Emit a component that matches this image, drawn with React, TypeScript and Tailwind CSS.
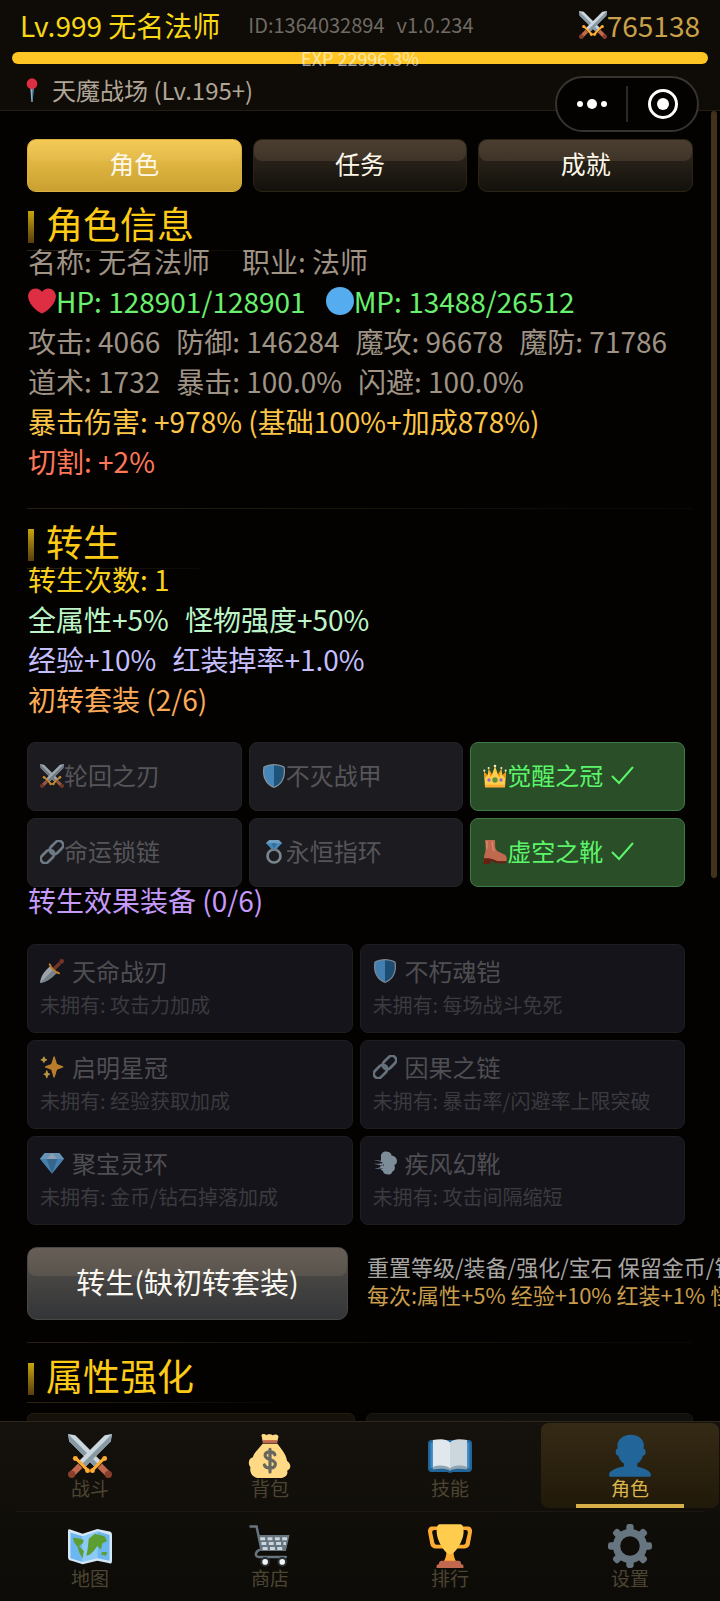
import { useState } from 'react';
import type { ReactNode } from 'react';
import clsx from 'clsx';

type IconName =
  | 'swords' | 'shield' | 'crown' | 'link' | 'ring' | 'boot' | 'dagger' | 'sparkles' | 'gem' | 'dash'
  | 'pin' | 'heart' | 'circle' | 'bag' | 'book' | 'person' | 'map' | 'cart' | 'trophy' | 'gear';

const sword = (
  <>
    <path d="M0 0l6 1 21 21-5 5L1 6z" fill="#CCD6DD" />
    <path d="M0 0l24.500 24.500L22 27 1 6z" fill="#8899A6" />
    <path d="M20 29.500l9.500-9.500" stroke="#FFAC33" strokeWidth="2.500" strokeLinecap="round" />
    <circle cx="20" cy="30" r="2" fill="#FFAC33" />
    <circle cx="30" cy="20" r="2" fill="#FFAC33" />
    <path d="M26 26l6 6" stroke="#C1694F" strokeWidth="5" />
    <circle cx="33" cy="33" r="3" fill="#8A3F2C" />
  </>
);

const icons: Record<IconName, ReactNode> = {
  swords: (
    <>
      <g>{sword}</g>
      <g transform="matrix(-1 0 0 1 36 0)">{sword}</g>
    </>
  ),
  shield: (
    <>
      <path d="M18 0C13 0 7 1.500 2 4c-1 8-.8 14 2.500 20.500C7.500 30.500 12 34 18 36c6-2 10.500-5.500 13.500-11.500C34.800 18 35 12 34 4c-5-2.500-11-4-16-4z" fill="#A9BCC9" />
      <path d="M18 1.800C13.500 1.800 8 3 3.700 5.200c-.8 7-.5 12.500 2.400 18.500C8.800 29 12.500 32 18 34z" fill="#55ACEE" />
      <path d="M18 1.800c4.500 0 10 1.200 14.300 3.400.8 7 .5 12.500-2.400 18.500C27.200 29 23.500 32 18 34z" fill="#226699" />
    </>
  ),
  crown: (
    <>
      <path d="M3 35L1.500 12 7 17 8.500 7l5 9L18 3l4.500 13 5-9L29 17l5.500-5L33 35z" fill="#FFCC4D" />
      <path d="M8.500 7l5 9L11 20zM27.500 7l-5 9 2.500 4zM1.500 12L7 17l-4 4zM34.500 12L29 17l4 4z" fill="#F4900C" />
      <path d="M3 31h30v4H3z" fill="#FFAC33" />
      <circle cx="18" cy="3" r="2" fill="#FFE8B6" />
      <circle cx="8.500" cy="6" r="1.600" fill="#FFE8B6" />
      <circle cx="27.500" cy="6" r="1.600" fill="#FFE8B6" />
      <circle cx="2" cy="10" r="1.600" fill="#FFE8B6" />
      <circle cx="34" cy="10" r="1.600" fill="#FFE8B6" />
      <circle cx="18" cy="24" r="4" fill="#5C913B" />
      <circle cx="9" cy="24" r="2.500" fill="#9266CC" />
      <circle cx="27" cy="24" r="2.500" fill="#9266CC" />
    </>
  ),
  link: (
    <g fill="none" stroke="#8899A6" strokeWidth="4" transform="rotate(-45 18 18)">
      <rect x="-3" y="11.500" width="23" height="13" rx="6.500" />
      <rect x="16" y="11.500" width="23" height="13" rx="6.500" />
    </g>
  ),
  ring: (
    <>
      <circle cx="18" cy="24" r="9.700" fill="none" stroke="#99AAB5" strokeWidth="4" />
      <path d="M14 12h8l3 4H11z" fill="#8899A6" />
      <path d="M11 0h14l5 5-8 8h-8L6 5z" fill="#55ACEE" />
      <path d="M6 5h24l-5-5H11z" fill="#8CCAF7" />
      <path d="M14 5h8l-4 8z" fill="#3B88C3" />
    </>
  ),
  boot: (
    <>
      <path d="M3 0h15c.5 7-.5 12 2 15 3 4 12 5 14.500 9 1.500 3 1.500 5 .5 8H22l-9-4-4 3H1l1-8c3-7 2-15 1-23z" fill="#C1694F" />
      <path d="M1 27c5 1 8-1 12 2l9 3h13v3H20l-8-4-2 5H1z" fill="#662113" />
      <path d="M6 2v11M14 2c0 8 0 12 3 15" stroke="#DA8B72" strokeWidth="2" fill="none" />
    </>
  ),
  dagger: (
    <>
      <path d="M0 36c1-9 5-16 15-25l10 10C16 30 9 35 0 36z" fill="#D5DFE6" />
      <path d="M0 36L20 16l5 5C16 30 9 35 0 36z" fill="#9FB0BC" />
      <path d="M21 15l9-9" stroke="#A0412D" strokeWidth="5" />
      <circle cx="32.500" cy="3.500" r="3.500" fill="#A0412D" />
      <path d="M14.500 8c2 5 8 12 14 13.500" stroke="#FFAC33" strokeWidth="3" fill="none" strokeLinecap="round" />
    </>
  ),
  sparkles: (
    <>
      <path d="M34.347 16.893l-8.899-3.294-3.323-10.891c-.128-.42-.517-.708-.956-.708-.439 0-.828.288-.956.708l-3.322 10.891-8.9 3.294c-.393.146-.653.519-.653.938 0 .418.26.793.653.938l8.895 3.293 3.324 11.223c.126.424.516.715.959.715.442 0 .833-.291.959-.716l3.324-11.223 8.896-3.293c.391-.144.652-.518.652-.937 0-.418-.261-.792-.653-.938z" fill="#FFAC33" />
      <path d="M14.347 27.894l-2.314-.856-.9-3.3c-.118-.436-.513-.738-.964-.738-.451 0-.846.302-.965.737l-.9 3.3-2.313.856c-.393.146-.653.52-.653.938 0 .418.26.793.653.938l2.301.853.907 3.622c.112.444.511.756.97.756.459 0 .858-.312.97-.757l.907-3.622 2.301-.853c.393-.144.653-.519.653-.937 0-.418-.26-.793-.653-.937zM10.009 6.231l-2.364-.875-.876-2.365c-.145-.393-.519-.653-.938-.653-.418 0-.792.26-.938.653l-.875 2.365-2.365.875c-.393.146-.653.52-.653.938 0 .418.26.793.653.938l2.365.875.875 2.365c.146.393.52.653.938.653.418 0 .792-.26.938-.653l.875-2.365 2.365-.875c.393-.146.653-.52.653-.938 0-.418-.26-.792-.653-.938z" fill="#FFCC4D" />
    </>
  ),
  gem: (
    <>
      <path d="M7 3h22l7 9-18 22L0 12z" fill="#5DADEC" />
      <path d="M7 3h22l7 9H0z" fill="#8CCAF7" />
      <path d="M10 12l8-9 8 9z" fill="#BDDDF4" />
      <path d="M10 12h16l-8 22z" fill="#4289C1" />
    </>
  ),
  dash: (
    <>
      <path d="M12 9c-1-6 5-9 9-8 4 0 7 3 7 6 5 0 8 4 8 8s-2 5-4 6c2 5 0 9-3 10-1 4-5 5-8 4-4 0-6-3-6-5-3-1-5-4-4-7-1-3-1-6 1-8z" fill="#AABFCF" />
      <path d="M0 15l14 3M2 21h14M4 28l11-3" stroke="#17161a" strokeWidth="2" />
      <path d="M0 13l15 2v2zM1 19h14v3zM2 27l14-4v3z" fill="#AABFCF" />
    </>
  ),
  pin: (
    <>
      <path d="M15.500 14h5L19 36h-2z" fill="#8CB4CC" />
      <path d="M18 14h2.500L19 36h-1z" fill="#4D86A5" />
      <circle cx="18" cy="8.500" r="8" fill="#DD2E44" />
    </>
  ),
  heart: (
    <path d="M35.885 11.833c0-5.450-4.418-9.868-9.867-9.868-3.308 0-6.227 1.633-8.018 4.129-1.791-2.496-4.710-4.129-8.017-4.129-5.450 0-9.868 4.417-9.868 9.868 0 .772.098 1.520.266 2.241C1.751 22.587 11.216 31.568 18 34.034c6.783-2.466 16.249-11.447 17.617-19.959.170-.721.268-1.469.268-2.242z" fill="#DD2E44" />
  ),
  circle: <circle cx="18" cy="18" r="18" fill="#55ACEE" />,
  bag: (
    <>
      <path d="M12 8c-3 4-7 7-8 11-4 1-4 6-2 8-1 5 2 9 7 9h17c5 0 7-3 6-6 4-2 3-6 0-8-1-6-5-10-8-14z" fill="#FFD983" />
      <path d="M11 1c1-2 3-1 4 0 1-1 4-1 5 0 2-1 4-1 5 1l-1 4H12z" fill="#FFD983" />
      <path d="M12 5h12v2.500H12z" fill="#C1694F" />
      <path d="M22 17c-1-3.300-8-3.300-8 .5s8.400 2.800 8.400 7-8 4.500-9 .8M18 12.500v18.500" fill="none" stroke="#66675f" strokeWidth="2.600" strokeLinecap="round" />
    </>
  ),
  book: (
    <>
      <path d="M0 8c0-2 1-3 3-3h30c2 0 3 1 3 3v20c0 2-1 3-3 3H20c-1 1-3 1-4 0H3c-2 0-3-1-3-3z" fill="#226699" />
      <path d="M2 7h32v21H2z" fill="#3B88C3" />
      <path d="M4 5c5-1 11-1.500 14 2v22c-4-2-9-2-14-1z" fill="#E1E8ED" />
      <path d="M32 5c-5-1-11-1.500-14 2v22c4-2 9-2 14-1z" fill="#CCD6DD" />
      <path d="M4 27c5-2 11-1.500 14 1 3-2.500 9-3 14-1v2c-5-1-11-1-14 1-3-2-9-2-14-1z" fill="#8FA4B0" />
    </>
  ),
  person: (
    <path d="M24 26.799v-2.566c2-1.348 4.080-3.779 4.703-6.896.186.103.206.170.413.170.991 0 1.709-1.287 1.709-2.873 0-1.562-.823-2.827-1.794-2.865.187-.674.293-1.577.293-2.735C29.324 5.168 26 .527 18.541.527c-6.629 0-10.777 4.641-10.777 8.507 0 1.123.069 2.043.188 2.755-.911.137-1.629 1.352-1.629 2.845 0 1.587.804 2.873 1.796 2.873.206 0 .025-.067.209-.170C8.952 20.453 11 22.885 13 24.232v2.414c-5 .645-12 3.437-12 6.230v1.061C1 35 2.076 35 3.137 35h29.725C33.924 35 35 35 35 33.938v-1.061c0-2.615-6-5.225-11-6.078z" fill="#226699" />
  ),
  map: (
    <>
      <path d="M0 6c0-2 1-2 3-1l9 3 12-4 9 2c2 0 3 1 3 3v21c0 2-1 3-3 2l-9-2-12 3-9-3c-2 0-3-1-3-3z" fill="#D5E6F5" />
      <path d="M2 7l10 3v21L2 28z" fill="#6DB7F0" />
      <path d="M12 10l12-4v22l-12 3z" fill="#8CCAF7" />
      <path d="M24 6l10 3v21l-10-2z" fill="#6DB7F0" />
      <path d="M4 11l6 1 3 1-1 3-3 2 4 4-1 6-3-5-1-4-3-4zM17 12l5-4 8 2 2 4-4 2-1 5-3-3-3 4-3 3-3 1 1-5zM28 23l4 0-1 3-4-1z" fill="#5C9E31" />
    </>
  ),
  cart: (
    <>
      <path d="M2 2h5l4 19M31 27H9c-4 0-3-5 1-6" fill="none" stroke="#66757F" strokeWidth="2" strokeLinecap="round" />
      <path d="M8 9h26l-3 13H11z" fill="#66757F" />
      <path d="M10 12h22M11 16h20M12 20h18" stroke="#CCD6DD" strokeWidth="2.500" strokeDasharray="4 2" />
      <circle cx="14" cy="31" r="4" fill="#292F33" />
      <circle cx="28" cy="31" r="4" fill="#292F33" />
      <circle cx="14" cy="31" r="2.300" fill="#F1F3F4" />
      <circle cx="28" cy="31" r="2.300" fill="#F1F3F4" />
    </>
  ),
  trophy: (
    <>
      <path d="M5.123 5h6C12.227 5 13 4.896 13 6V4c0-1.104-.773-2-1.877-2h-8c-2 0-3.583 2.125-3 5 0 0 1.791 9.375 1.917 9.958C2.373 18.500 4.164 20 6.081 20h6.958c1.105 0-.039-1.896-.039-3v-2c0 1.104-.773 2-1.877 2h-4c-1.104 0-1.833-1.042-2-2S3.539 7.667 3.539 7.667C3.206 5.750 4.018 5 5.123 5zm25.812 0h-6C23.831 5 22 4.896 22 6V4c0-1.104 1.831-2 2.935-2h8c2 0 3.584 2.125 3 5 0 0-1.633 9.419-1.771 10-.354 1.500-2.042 3-4 3h-7.146C21.914 20 22 18.104 22 17v-2c0 1.104 1.831 2 2.935 2h4c1.104 0 1.834-1.042 2-2s1.584-7.333 1.584-7.333C32.851 5.750 32.040 5 30.935 5zM20.832 22c0-6.958-2.709 0-2.709 0s-3-6.958-3 0-3.291 10-3.291 10h12.292c-.001 0-3.292-3.042-3.292-10z" fill="#FFAC33" />
      <path d="M29.123 6.577c0 6.775-6.770 18.192-11 18.192-4.231 0-11-11.417-11-18.192 0-5.195 1-6.319 3-6.319 1.374 0 6.025-.027 8-.027l7-.001c2.917-.001 4 .684 4 6.347z" fill="#FFCC4D" />
      <path d="M27 33H9v-1c0-1.104 1.164-2 2.206-2h13.917C26.165 30 27 30.896 27 32zM29 36H7v-1.625C7 33.615 7.738 33 8.498 33h19.250c.759 0 1.252.615 1.252 1.375z" fill="#C1694F" />
    </>
  ),
  gear: (
    <g fill="#66757F">
      <circle cx="18" cy="18" r="11" fill="none" stroke="#66757F" strokeWidth="6" />
      {[0, 45, 90, 135, 180, 225, 270, 315].map((deg) => (
        <rect key={deg} x="15" y="0" width="6" height="8" rx="2" transform={`rotate(${deg} 18 18)`} />
      ))}
    </g>
  ),
};

function Icon({ name, className }: { name: IconName; className?: string }) {
  return (
    <svg viewBox="0 0 36 36" aria-hidden="true" className={clsx('shrink-0', className)}>
      {icons[name]}
    </svg>
  );
}

function SectionTitle({ children }: { children: ReactNode }) {
  return (
    <h2 className="relative flex h-9 w-fit items-center pb-1 pl-px text-[37px] leading-8 text-[#fdcb16]">
      <span className="mt-2 mr-3 h-8 w-1.5 bg-linear-to-b from-[#c9a50c] to-[#583f0d]" />
      {children}
      <span className="absolute top-[43px] left-0 -right-20 h-px bg-linear-to-r from-[#2e240e] to-[#0a0805]" />
    </h2>
  );
}

function Divider() {
  return <hr className="mb-4 h-px border-0 bg-linear-to-r from-[#28200f] to-[#090805]" />;
}

function StatLine({ items, className }: { items: string[]; className?: string }) {
  return (
    <p className={clsx('flex gap-4', className)}>
      {items.map((item) => (
        <span key={item}>{item}</span>
      ))}
    </p>
  );
}

const tabs = ['角色', '任务', '成就'];

const setItems: { icon: IconName; name: string; owned?: boolean }[] = [
  { icon: 'swords', name: '轮回之刃' },
  { icon: 'shield', name: '不灭战甲' },
  { icon: 'crown', name: '觉醒之冠', owned: true },
  { icon: 'link', name: '命运锁链' },
  { icon: 'ring', name: '永恒指环' },
  { icon: 'boot', name: '虚空之靴', owned: true },
];

const effectItems: { icon: IconName; name: string; effect: string }[] = [
  { icon: 'dagger', name: '天命战刃', effect: '攻击力加成' },
  { icon: 'shield', name: '不朽魂铠', effect: '每场战斗免死' },
  { icon: 'sparkles', name: '启明星冠', effect: '经验获取加成' },
  { icon: 'link', name: '因果之链', effect: '暴击率/闪避率上限突破' },
  { icon: 'gem', name: '聚宝灵环', effect: '金币/钻石掉落加成' },
  { icon: 'dash', name: '疾风幻靴', effect: '攻击间隔缩短' },
];

const navRows: { icon: IconName; label: string }[][] = [
  [
    { icon: 'swords', label: '战斗' },
    { icon: 'bag', label: '背包' },
    { icon: 'book', label: '技能' },
    { icon: 'person', label: '角色' },
  ],
  [
    { icon: 'map', label: '地图' },
    { icon: 'cart', label: '商店' },
    { icon: 'trophy', label: '排行' },
    { icon: 'gear', label: '设置' },
  ],
];

export default function App() {
  const [tab, setTab] = useState('角色');
  const [page, setPage] = useState('角色');

  return (
    <div className="relative flex h-screen flex-col overflow-hidden bg-[#030201] font-['Noto_Sans_CJK_SC',sans-serif]">
      <header className="shrink-0 border-b border-[#251d10] bg-[#0f0b07] px-3">
        <div className="flex h-[52px] items-center px-2 pb-0.5 whitespace-nowrap">
          <span className="text-[28px] text-[#f8d714]">Lv.999 无名法师</span>
          <span className="ml-7 text-xl text-[#6e6a64]">ID:1364032894</span>
          <span className="ml-3 text-xl text-[#6e6a64]">v1.0.234</span>
          <span className="ml-auto flex items-center text-[28px] text-[#c9a14a]">
            <Icon name="swords" className="size-7" />
            765138
          </span>
        </div>
        <div className="flex h-3 items-center justify-center rounded-full bg-[#ffc524] text-lg leading-3 text-white/60">
          EXP 22996.3%
        </div>
        <div className="flex h-[46px] items-center gap-2 pt-1.5 pl-2 text-2xl text-[#b0a597]">
          <Icon name="pin" className="size-6" />
          天魔战场 (Lv.195+)
        </div>
      </header>

      {/* host app capsule */}
      <div className="absolute top-[76px] right-[21px] flex h-14 w-36 items-center rounded-full border-2 border-[#37332f] bg-[#030201]">
        <button type="button" aria-label="更多" className="flex flex-1 items-center justify-center gap-1">
          <span className="size-1.5 rounded-full bg-white" />
          <span className="size-2.5 rounded-full bg-white" />
          <span className="size-1.5 rounded-full bg-white" />
        </button>
        <span className="h-9 w-0.5 bg-[#2c2a28]" />
        <button type="button" aria-label="关闭" className="flex flex-1 items-center justify-center">
          <span className="flex size-[30px] items-center justify-center rounded-full border-3 border-white">
            <span className="size-3 rounded-full bg-white" />
          </span>
        </button>
      </div>

      <div className="relative min-h-0 flex-1">
        <main className="h-full overflow-hidden px-[27px] pt-7">
          <div className="flex gap-[11px]">
            {tabs.map((name) => (
              <button
                key={name}
                type="button"
                onClick={() => setTab(name)}
                className={clsx(
                  'relative h-[53px] flex-1 rounded-[9px] border pb-1 text-[25px] leading-none text-[#fdf8ea] before:absolute before:inset-x-0 before:top-0 before:h-[21px] before:rounded-lg',
                  tab === name
                    ? 'border-[#d9b03c] bg-linear-to-b from-[#f3c64c] to-[#c9a031] before:bg-white/5'
                    : 'border-[#2c2515] bg-linear-to-b from-[#352c22] to-[#13110b] before:bg-[#f0c8a0]/12',
                )}
              >
                <span className="relative">{name}</span>
              </button>
            ))}
          </div>

          <section className="mt-[15px]">
            <SectionTitle>角色信息</SectionTitle>
            <div className="relative -mt-0.5 pl-px text-[28px] leading-10 whitespace-nowrap text-[#9f9385]">
              <p className="flex gap-8">
                <span>名称: 无名法师</span>
                <span>职业: 法师</span>
              </p>
              <p className="flex items-center text-[#69f06e]">
                <Icon name="heart" className="size-7" />
                <span className="mr-5">HP: 128901/128901</span>
                <Icon name="circle" className="size-7" />
                <span>MP: 13488/26512</span>
              </p>
              <StatLine items={['攻击: 4066', '防御: 146284', '魔攻: 96678', '魔防: 71786']} />
              <StatLine items={['道术: 1732', '暴击: 100.0%', '闪避: 100.0%']} />
              <p className="text-[#fcc547]">暴击伤害: +978% (基础100%+加成878%)</p>
              <p className="text-[#ff7759]">切割: +2%</p>
            </div>
          </section>

          <section className="mt-[27px]">
            <Divider />
            <SectionTitle>转生</SectionTitle>
            <div className="relative -mt-0.5 pl-px text-[28px] leading-10 whitespace-nowrap">
              <p className="text-[#fbd21b]">转生次数: 1</p>
              <StatLine className="text-[#bdf5c8]" items={['全属性+5%', '怪物强度+50%']} />
              <StatLine className="text-[#c4bffc]" items={['经验+10%', '红装掉率+1.0%']} />
              <p className="text-[#fbab58]">初转套装 (2/6)</p>
            </div>

            <ul className="mt-[23px] mr-2 grid grid-cols-3 gap-[7px]">
              {setItems.map((item) => (
                <li
                  key={item.name}
                  className={clsx(
                    'flex h-[69px] items-center rounded-lg border px-3 pb-1 text-2xl',
                    item.owned ? 'border-[#3f7a45] bg-[#294e28] text-[#5cf56a]' : 'border-[#232327] bg-[#1c1b20] text-[#56555a]',
                  )}
                >
                  <Icon name={item.icon} className={clsx('mt-0.5 size-6', !item.owned && 'opacity-75')} />
                  {item.name}
                  {item.owned && (
                    <svg viewBox="0 0 24 24" className="ml-2 size-6" fill="none" stroke="currentColor" strokeWidth="2" aria-label="已拥有">
                      <path d="M1 13l7 7L22 4" />
                    </svg>
                  )}
                </li>
              ))}
            </ul>

            <p className="-mt-0.5 pl-px text-[28px] leading-[30px] text-[#c59afb]">转生效果装备 (0/6)</p>

            <ul className="mt-[29px] mr-2 grid grid-cols-2 gap-[7px]">
              {effectItems.map((item) => (
                <li key={item.name} className="h-[89px] rounded-lg border border-[#1e1d22] bg-[#15141a] px-3 pt-2.5">
                  <div className="flex items-center gap-2 text-2xl leading-8 text-[#4f4e53]">
                    <Icon name={item.icon} className="size-6 opacity-70" />
                    {item.name}
                  </div>
                  <p className="text-xl leading-9 whitespace-nowrap text-[#3b3a3f]">未拥有: {item.effect}</p>
                </li>
              ))}
            </ul>

            <div className="mt-[22px] flex items-center gap-[19px]">
              <button
                type="button"
                className="relative h-[73px] w-[321px] shrink-0 rounded-[10px] border border-[#4a4844] bg-linear-to-b from-[#56514c] to-[#333537] pb-1 text-[29px] leading-none text-[#fbf8f2] before:absolute before:inset-x-0 before:top-0 before:h-7 before:rounded-lg before:bg-[#ffdcb4]/10"
              >
                <span className="relative">转生(缺初转套装)</span>
              </button>
              <div className="pb-2 text-[22px] leading-7 whitespace-nowrap text-[#a8a6a3]">
                <p>重置等级/装备/强化/宝石 保留金币/钻石</p>
                <p className="text-[#c99d4b]">每次:属性+5% 经验+10% 红装+1% 怪物+50%</p>
              </div>
            </div>
          </section>

          <section className="mt-[22px]">
            <Divider />
            <SectionTitle>属性强化</SectionTitle>
            <div className="mt-[18px] grid grid-cols-2 gap-[11px]">
              <div className="h-24 rounded-md border border-[#221c0f] bg-[#151009]" />
              <div className="h-24 rounded-md border border-[#1b1812] bg-[#12100c]" />
            </div>
          </section>
        </main>
        <span className="absolute top-0 right-[3px] h-[767px] w-1.5 rounded-full bg-[#42321b]" />
      </div>

      <nav className="relative shrink-0 border-t border-[#2f2717] bg-linear-to-b from-[#15120d] to-[#0d0b07]">
        {navRows.map((row, i) => (
          <div key={i} className="grid grid-cols-4">
            {i === 1 && <hr className="col-span-4 mx-4 h-px border-0 bg-[#1c1812]" />}
            {row.map(({ icon, label }) => (
              <button
                key={label}
                type="button"
                onClick={() => setPage(label)}
                className={clsx(
                  'relative mx-px mt-px mb-[3px] flex h-[85px] flex-col items-center rounded-lg pt-[11px] text-[19px] leading-5',
                  page === label
                    ? 'bg-linear-to-b from-[#352a15] to-[#211909] text-[#dcb54c] after:absolute after:bottom-0 after:h-1 after:w-[108px] after:bg-[#d8b04a]'
                    : 'text-[#4d4533]',
                )}
              >
                <Icon name={icon} className="size-11" />
                {label}
              </button>
            ))}
          </div>
        ))}
      </nav>
    </div>
  );
}
